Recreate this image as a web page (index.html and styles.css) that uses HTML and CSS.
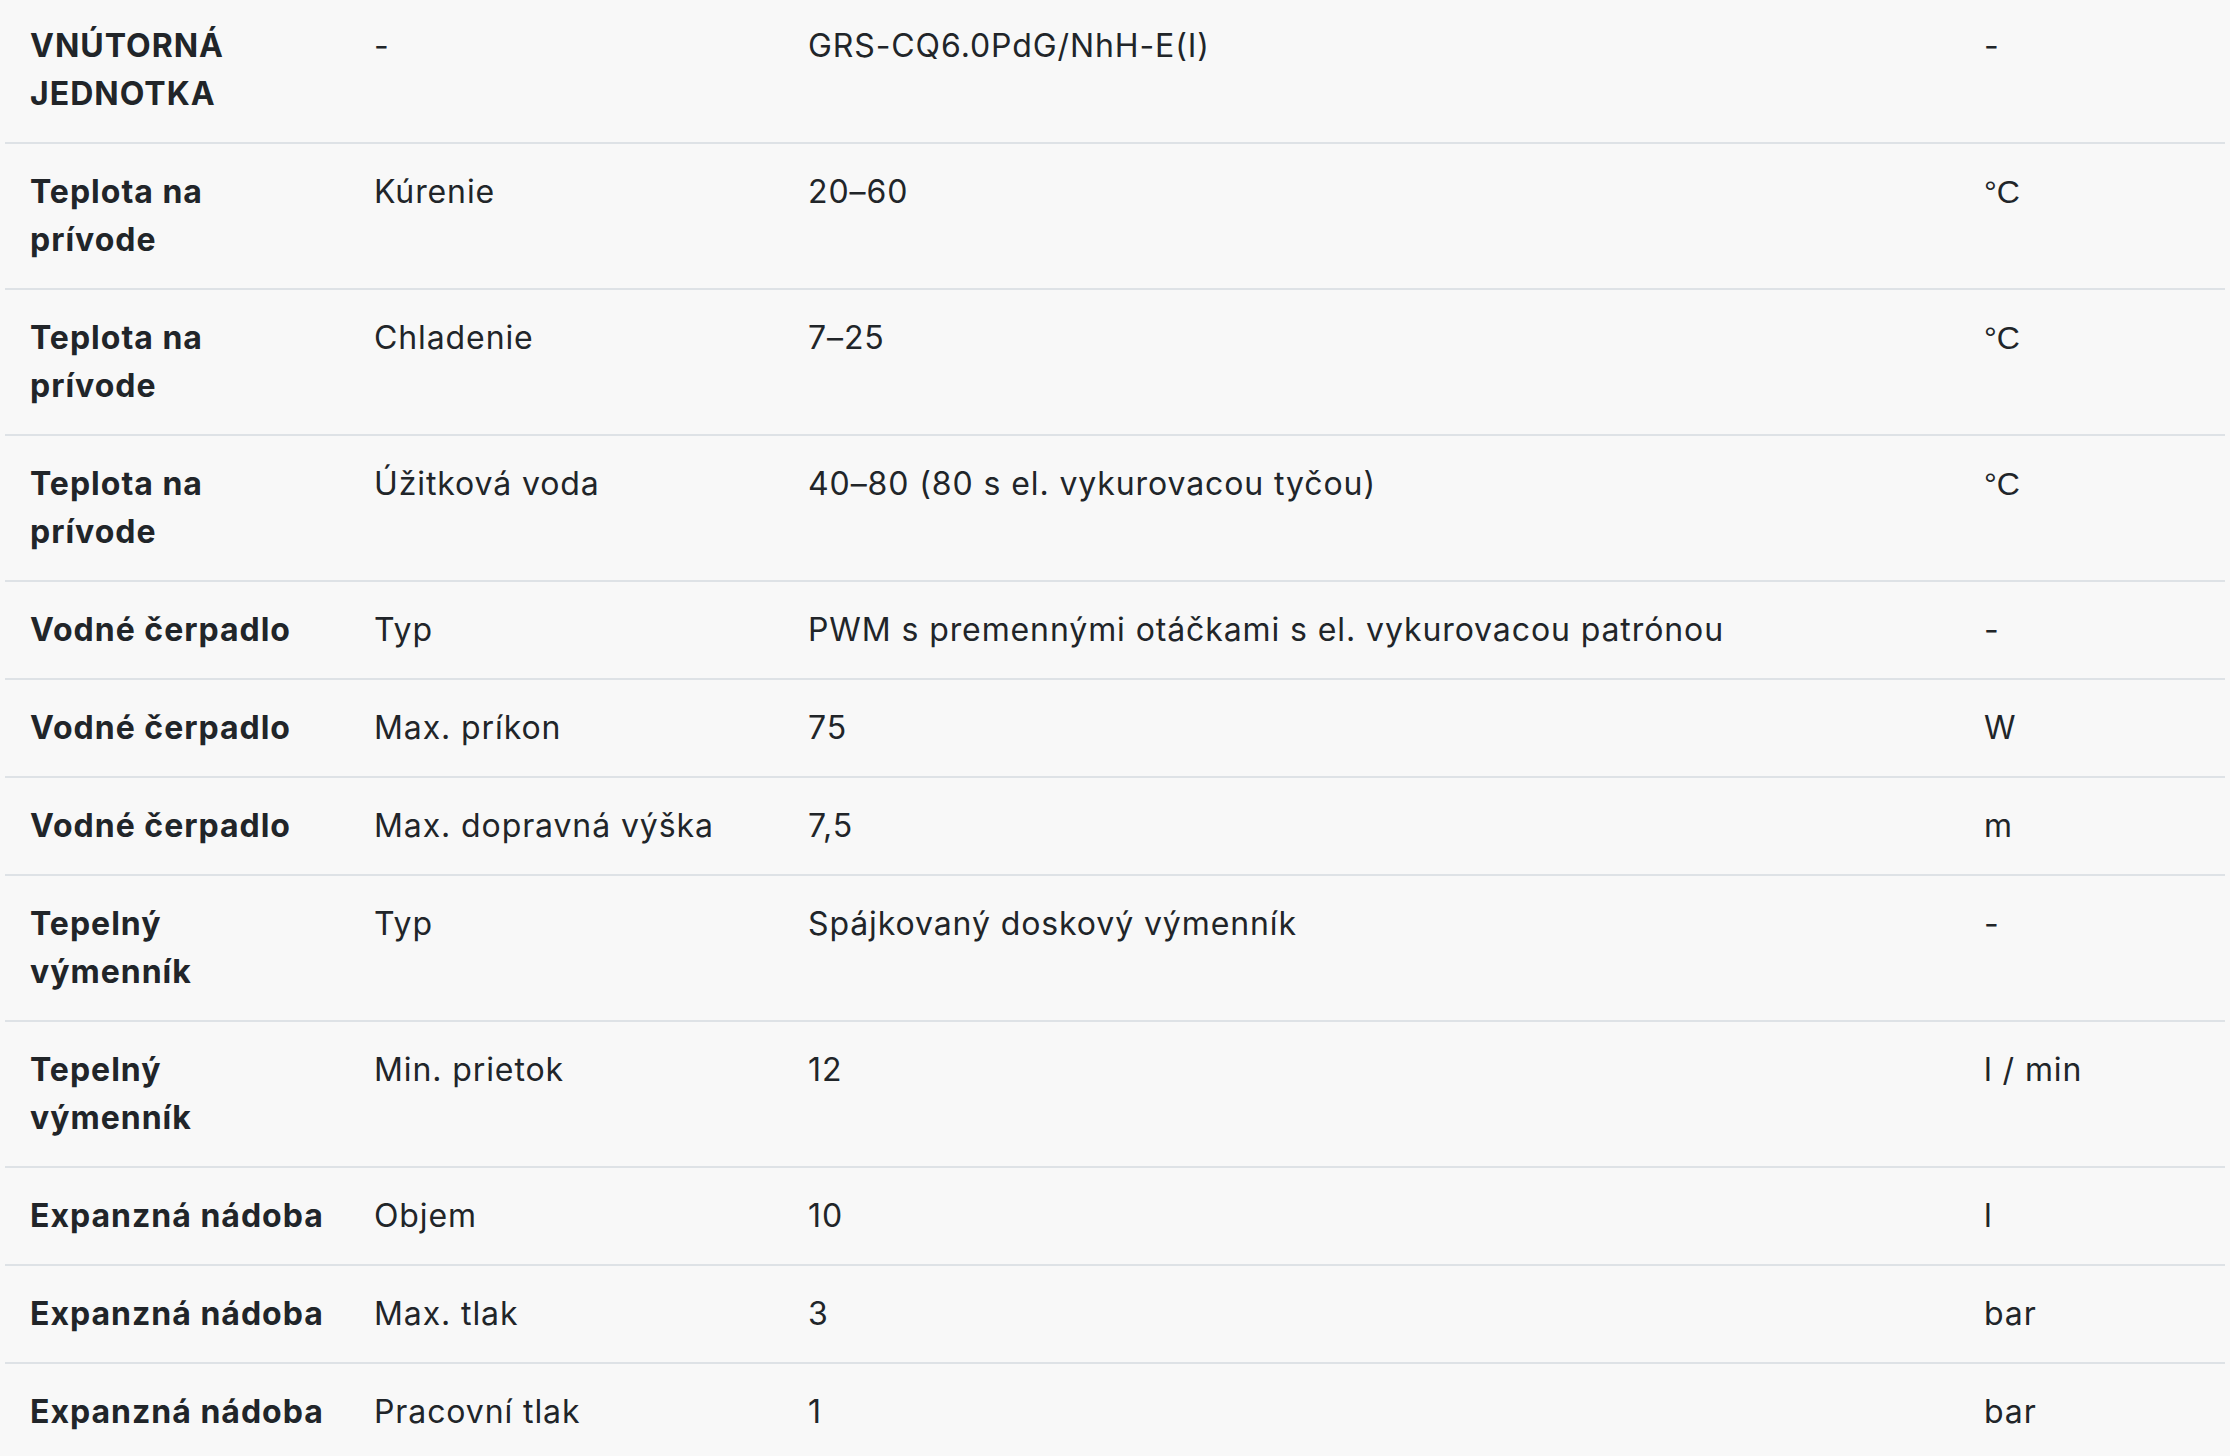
FILE: index.html
```html
<!DOCTYPE html>
<html lang="sk">
<head>
<meta charset="utf-8">
<title>Technické parametre</title>
<link rel="stylesheet" href="styles.css">
</head>
<body>
<div class="wrap">
<table class="spec">
  <colgroup>
    <col class="c1"><col class="c2"><col class="c3"><col class="c4">
  </colgroup>
  <tbody>
    <tr><th>VNÚTORNÁ JEDNOTKA</th><td>-</td><td>GRS-CQ6.0PdG/NhH-E(I)</td><td>-</td></tr>
    <tr><th>Teplota na prívode</th><td>Kúrenie</td><td>20–60</td><td><span class="deg">°C</span></td></tr>
    <tr><th>Teplota na prívode</th><td>Chladenie</td><td>7–25</td><td><span class="deg">°C</span></td></tr>
    <tr><th>Teplota na prívode</th><td>Úžitková voda</td><td>40–80 (80 s el. vykurovacou tyčou)</td><td><span class="deg">°C</span></td></tr>
    <tr><th>Vodné čerpadlo</th><td>Typ</td><td>PWM s premennými otáčkami s el. vykurovacou patrónou</td><td>-</td></tr>
    <tr><th>Vodné čerpadlo</th><td>Max. príkon</td><td>75</td><td>W</td></tr>
    <tr><th>Vodné čerpadlo</th><td>Max. dopravná výška</td><td>7,5</td><td>m</td></tr>
    <tr><th>Tepelný výmenník</th><td>Typ</td><td>Spájkovaný doskový výmenník</td><td>-</td></tr>
    <tr><th>Tepelný výmenník</th><td>Min. prietok</td><td>12</td><td>l / min</td></tr>
    <tr><th>Expanzná nádoba</th><td>Objem</td><td>10</td><td>l</td></tr>
    <tr><th>Expanzná nádoba</th><td>Max. tlak</td><td>3</td><td>bar</td></tr>
    <tr><th>Expanzná nádoba</th><td>Pracovní tlak</td><td>1</td><td>bar</td></tr>
  </tbody>
</table>
</div>
</body>
</html>
```
FILE: styles.css
```css
html, body {
  margin: 0;
  padding: 0;
  background: #f8f8f8;
}

.wrap {
  padding: 0 5px;
}

.spec {
  width: 2220px;
  table-layout: fixed;
  border-collapse: collapse;
  font-family: Inter, "Open Sans", sans-serif;
  font-size: 32px;
  line-height: 48px;
  letter-spacing: 0.9px;
  color: #212529;
}

.c1 { width: 344px; }
.c2 { width: 434px; }
.c3 { width: 1176px; }
.c4 { width: 266px; }

.spec th,
.spec td {
  padding: 24px 25px;
  text-align: left;
  vertical-align: top;
  border-bottom: 2px solid #dee2e6;
}

.spec th {
  padding-right: 21px;
  font-weight: 700;
  letter-spacing: 1px;
}

.spec tr:first-child th,
.spec tr:first-child td {
  padding-top: 22px;
}

.spec td {
  font-weight: 400;
}

.deg {
  font-family: "Liberation Sans", Arial, sans-serif;
  letter-spacing: 0;
}
```
